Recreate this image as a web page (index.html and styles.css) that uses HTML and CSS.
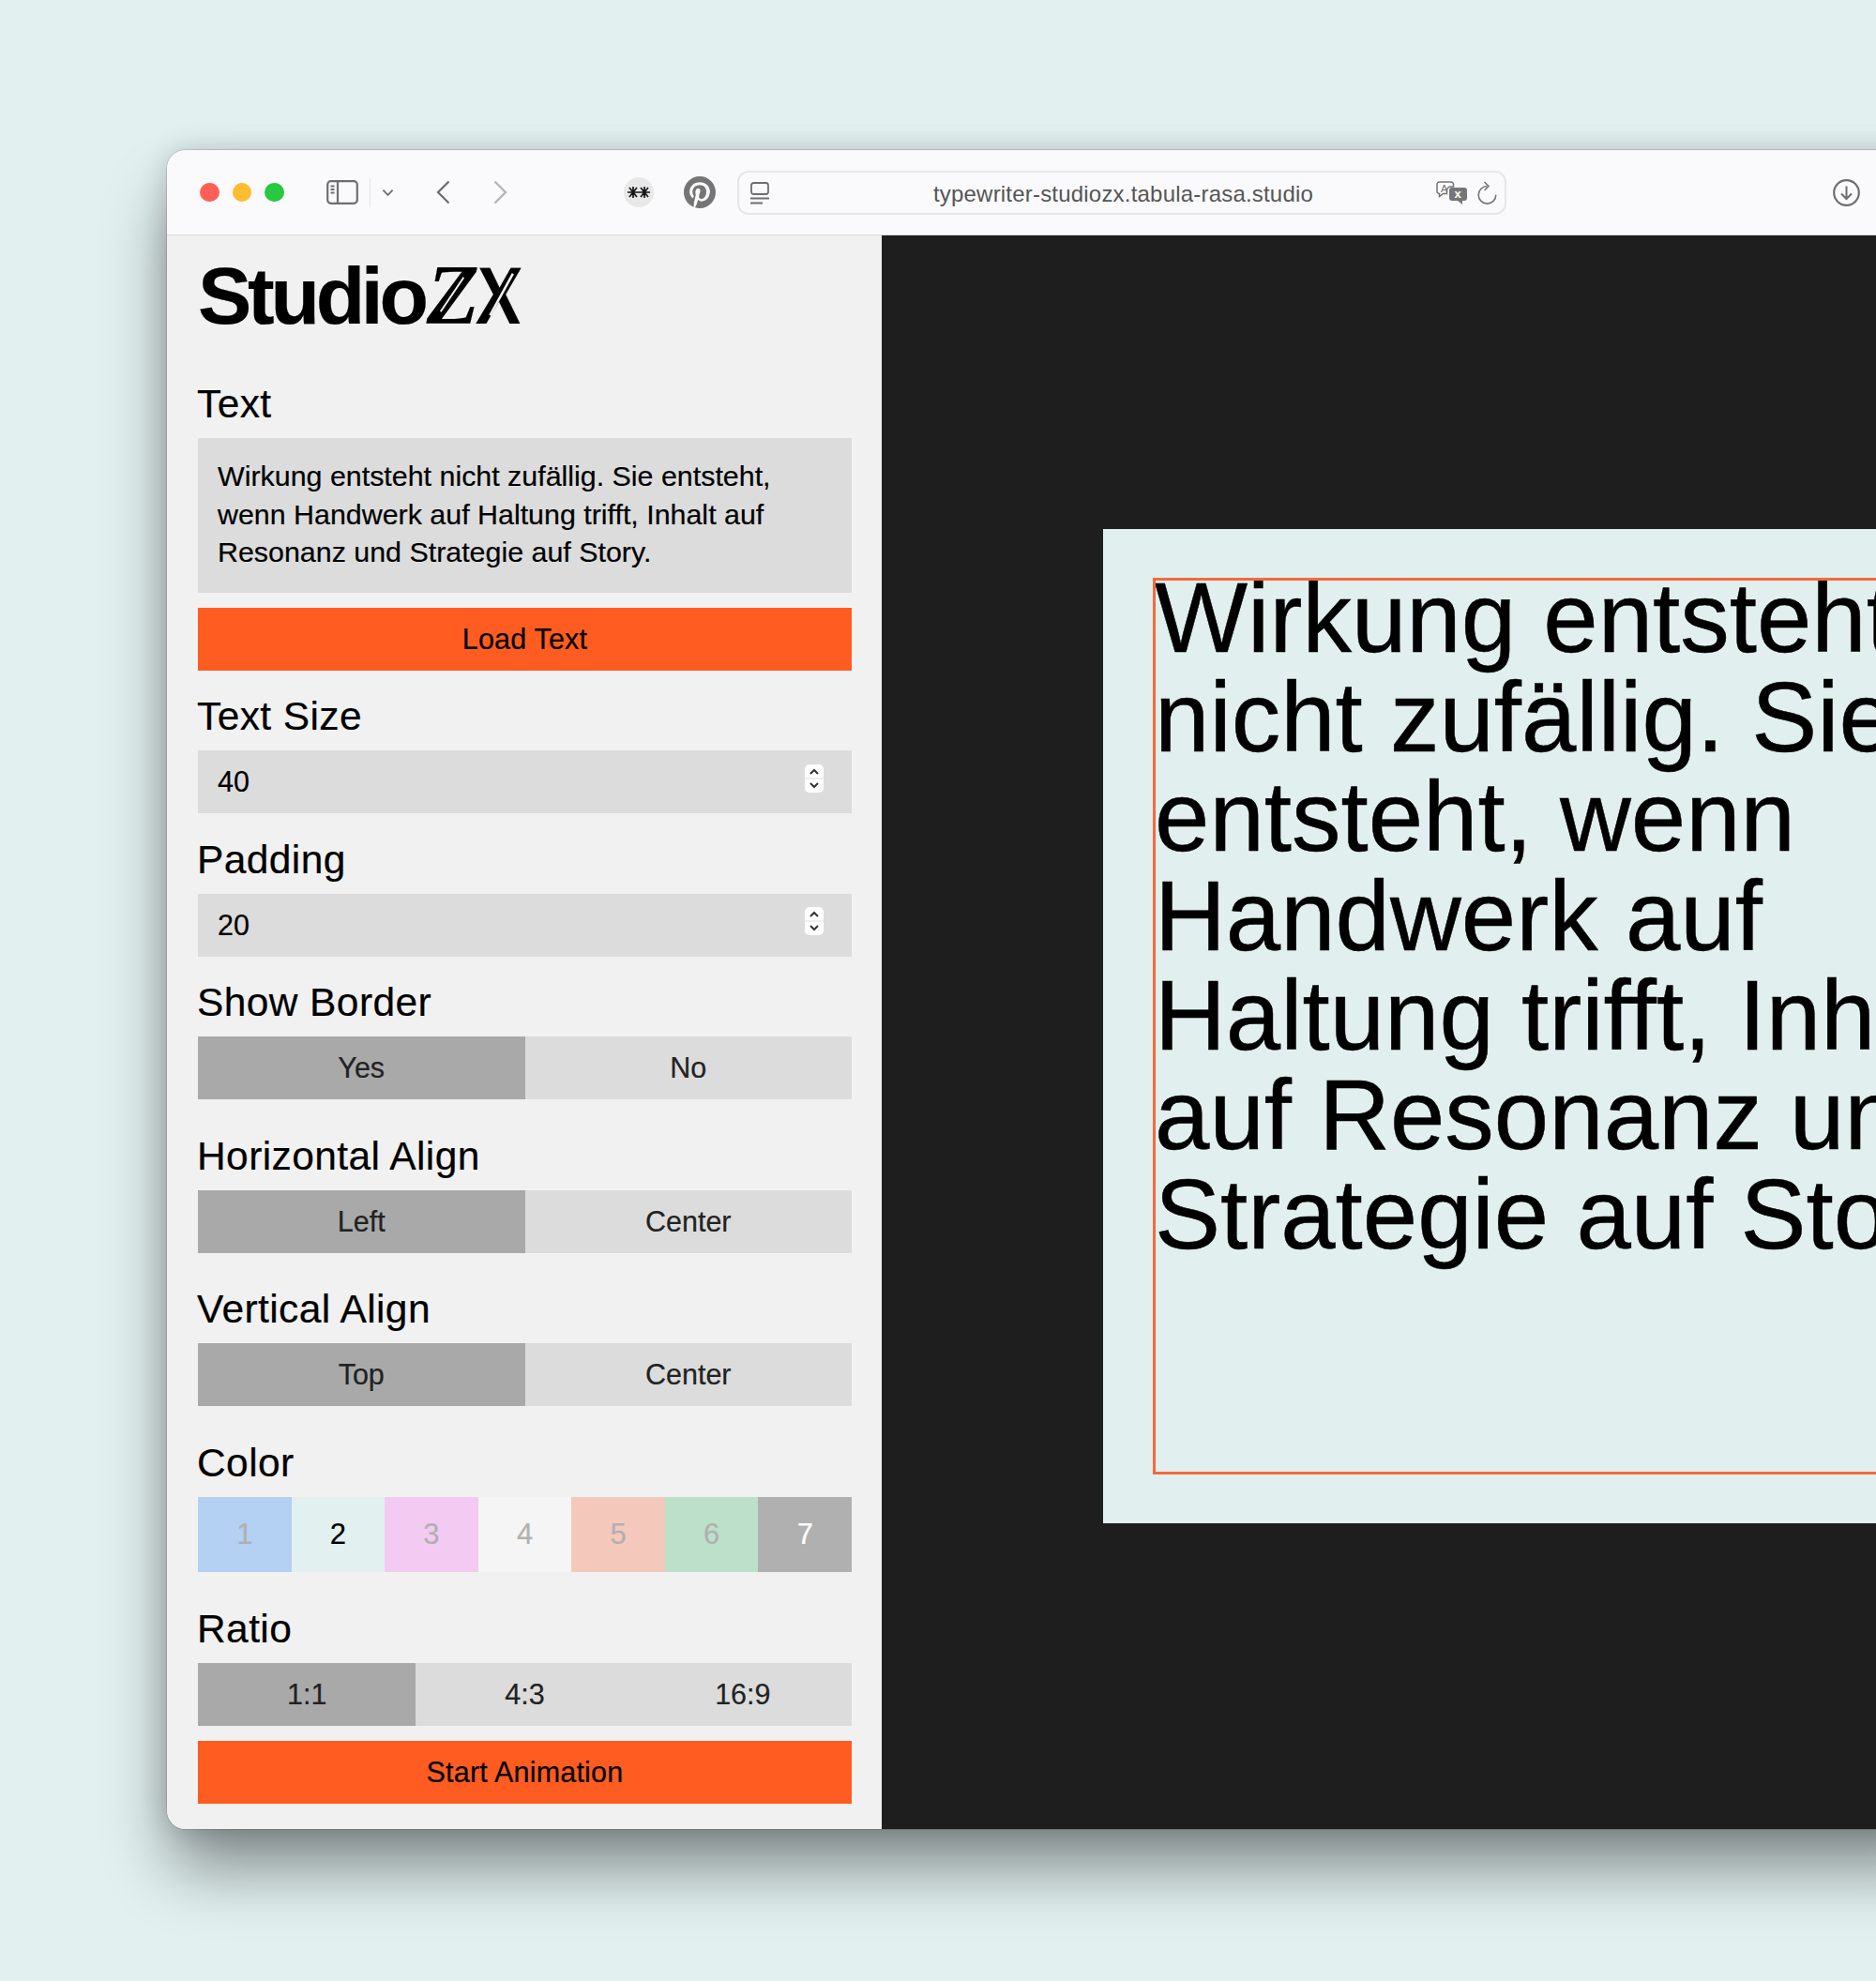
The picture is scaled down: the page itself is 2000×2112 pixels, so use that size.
FILE: index.html
```html
<!DOCTYPE html>
<html lang="de">
<head>
<meta charset="utf-8">
<title>StudioZX</title>
<link rel="stylesheet" href="styles.css">
</head>
<body>
<div class="window">
  <header class="toolbar">
    <span class="light red"></span><span class="light amber"></span><span class="light green"></span>
    <svg class="ic-sidebar" viewBox="0 0 34 26"><rect x="1.2" y="1.2" width="31.6" height="23.6" rx="3.5" fill="none" stroke="#6e6e6e" stroke-width="2.2"/><line x1="12" y1="1" x2="12" y2="25" stroke="#6e6e6e" stroke-width="2.2"/><path d="M4.5 6.5h4M4.5 10h4M4.5 13.5h4" stroke="#6e6e6e" stroke-width="1.8"/></svg>
    <span class="divider"></span>
    <svg class="ic-chevron" viewBox="0 0 14 9"><path d="M1.5 1.5 7 7l5.5-5.5" fill="none" stroke="#6e6e6e" stroke-width="2"/></svg>
    <svg class="ic-back" viewBox="0 0 15 26"><path d="M13.5 1.5 2 13l11.5 11.5" fill="none" stroke="#6e6e6e" stroke-width="2.3"/></svg>
    <svg class="ic-forward" viewBox="0 0 15 26"><path d="M1.5 1.5 13 13 1.5 24.5" fill="none" stroke="#b4b4b4" stroke-width="2.3"/></svg>
    <svg class="ic-star" viewBox="0 0 32 32"><circle cx="16" cy="16" r="16" fill="#e8e8e8"/><path d="M4 16h24M10 10v12M22 10v12M6 11l8 10M14 11l-8 10M18 11l8 10M26 11l-8 10" stroke="#161616" stroke-width="1.7"/></svg>
    <svg class="ic-pin" viewBox="0 0 24 24"><path fill="#757575" d="M12 0C5.373 0 0 5.372 0 12c0 5.084 3.163 9.426 7.627 11.174-.105-.949-.2-2.405.042-3.441.218-.937 1.407-5.965 1.407-5.965s-.359-.719-.359-1.782c0-1.668.967-2.914 2.171-2.914 1.023 0 1.518.769 1.518 1.69 0 1.029-.655 2.568-.994 3.995-.283 1.194.599 2.169 1.777 2.169 2.133 0 3.772-2.249 3.772-5.495 0-2.873-2.064-4.882-5.012-4.882-3.414 0-5.418 2.561-5.418 5.207 0 1.031.397 2.138.893 2.738.098.119.112.224.083.345l-.333 1.36c-.053.22-.174.267-.402.161-1.499-.698-2.436-2.889-2.436-4.649 0-3.785 2.75-7.262 7.929-7.262 4.163 0 7.398 2.967 7.398 6.931 0 4.136-2.607 7.464-6.227 7.464-1.216 0-2.359-.631-2.75-1.378l-.748 2.853c-.271 1.043-1.002 2.35-1.492 3.146C9.57 23.812 10.763 24 12 24c6.627 0 12-5.373 12-12 0-6.628-5.373-12-12-12z"/></svg>
    <div class="address">
      <svg class="ic-reader" viewBox="0 0 20 24"><rect x="1" y="1" width="18" height="12" rx="2.5" fill="none" stroke="#6e6e6e" stroke-width="1.8"/><path d="M0 17.5h20M0 22.5h13" stroke="#6e6e6e" stroke-width="1.8"/></svg>
      <span class="url">typewriter-studiozx.tabula-rasa.studio</span>
      <span class="addr-right">
        <svg class="ic-translate" viewBox="0 0 33 25"><path d="M3.5 1h12.5a2.500 2.500 0 0 1 2.500 2.500V6h-3a4 4 0 0 0-4 4v3.500H7.500l-4 3v-3H3.500A2.500 2.500 0 0 1 1 11V3.500A2.500 2.500 0 0 1 3.500 1z" fill="none" stroke="#757575" stroke-width="1.500"/><text class="tr-a" x="5" y="12">A</text><path d="M17 7h13a3 3 0 0 1 3 3v8a3 3 0 0 1-3 3h-2v4l-5-4h-6a3 3 0 0 1-3-3v-8a3 3 0 0 1 3-3z" fill="#757575"/><text class="tr-x" x="19.500" y="18">x</text></svg>
        <svg class="ic-reload" viewBox="0 0 21 25"><path d="M10.500 5.500a9.300 9.300 0 1 0 9.300 9.300" fill="none" stroke="#757575" stroke-width="1.600"/><path d="M7.500 1l4.500 4.500-4.500 4.500" fill="none" stroke="#757575" stroke-width="1.600"/></svg>
      </span>
    </div>
    <svg class="ic-download" viewBox="0 0 29 29"><circle cx="14.500" cy="14.500" r="13.300" fill="none" stroke="#6e6e6e" stroke-width="2.200"/><path d="M14.500 7.500v13M9 15.500l5.500 5.500 5.500-5.500" fill="none" stroke="#6e6e6e" stroke-width="2"/></svg>
  </header>
  <div class="content">
    <aside class="sidebar">
      <h1 class="logo">Studio<span class="zx"><span class="glyph z">Z</span><span class="glyph x">X</span></span></h1>
      <div class="label first">Text</div>
      <div class="textarea">Wirkung entsteht nicht zufällig. Sie entsteht, wenn Handwerk auf Haltung trifft, Inhalt auf Resonanz und Strategie auf Story.</div>
      <button class="action load">Load Text</button>
      <div class="label">Text Size</div>
      <div class="number"><span>40</span><svg class="spinner" viewBox="0 0 20 30"><rect width="20" height="30" rx="5" fill="#fff"/><path d="M0 15h20" stroke="#dcdcdc"/><path d="M6 10l4-4 4 4M6 20l4 4 4-4" fill="none" stroke="#333" stroke-width="2"/></svg></div>
      <div class="label">Padding</div>
      <div class="number"><span>20</span><svg class="spinner" viewBox="0 0 20 30"><rect width="20" height="30" rx="5" fill="#fff"/><path d="M0 15h20" stroke="#dcdcdc"/><path d="M6 10l4-4 4 4M6 20l4 4 4-4" fill="none" stroke="#333" stroke-width="2"/></svg></div>
      <div class="label">Show Border</div>
      <div class="seg spaced"><button class="opt on">Yes</button><button class="opt">No</button></div>
      <div class="label">Horizontal Align</div>
      <div class="seg spaced"><button class="opt on">Left</button><button class="opt">Center</button></div>
      <div class="label">Vertical Align</div>
      <div class="seg spaced"><button class="opt on">Top</button><button class="opt">Center</button></div>
      <div class="label">Color</div>
      <div class="swatches spaced">
        <button class="sw c1">1</button><button class="sw c2">2</button><button class="sw c3">3</button><button class="sw c4">4</button><button class="sw c5">5</button><button class="sw c6">6</button><button class="sw c7">7</button>
      </div>
      <div class="label">Ratio</div>
      <div class="seg"><button class="opt on">1:1</button><button class="opt">4:3</button><button class="opt">16:9</button></div>
      <button class="action start">Start Animation</button>
    </aside>
    <main class="stage">
      <div class="canvas">
        <div class="frame"><p class="type">Wirkung entsteht nicht zufällig. Sie entsteht, wenn Handwerk auf Haltung trifft, Inhalt auf Resonanz und Strategie auf Story.</p></div>
      </div>
    </main>
  </div>
</div>
</body>
</html>
```
FILE: styles.css
```css
* { box-sizing: border-box; }
html, body { margin: 0; height: 2112px; overflow: hidden; }
body {
  background: #e2f0f0;
  font-family: "Liberation Sans", Arial, sans-serif;
  color: #000;
  padding: 160px 0 0 178px;
}
.window {
  width: 1900px;
  height: 1790px;
  border-radius: 20px;
  box-shadow: 0 45px 70px -5px rgba(0, 0, 0, .44), 0 0 30px rgba(0, 0, 0, .16), 0 0 0 1px rgba(0, 0, 0, .12);
  display: flex;
  flex-direction: column;
}
.toolbar {
  height: 91px;
  flex: none;
  background: #fafafc;
  border-radius: 20px 0 0 0;
  border-bottom: 1px solid #d9d9d9;
  display: flex;
  align-items: center;
  padding-left: 35px;
}
.light { width: 20.500px; height: 20.500px; border-radius: 50%; margin-right: 14px; flex: none; }
.red { background: #ff5f57; }
.amber { background: #febc2e; }
.green { background: #28c840; margin-right: 0; }
.toolbar svg { flex: none; display: block; }
.ic-sidebar { width: 34px; height: 26px; margin-left: 45.500px; }
.divider { width: 1px; height: 31px; background: #e4e4e6; margin-left: 12px; flex: none; }
.ic-chevron { width: 13px; height: 9px; margin-left: 11.500px; }
.ic-back { width: 15px; height: 26px; margin-left: 45px; }
.ic-forward { width: 15px; height: 26px; margin-left: 46.500px; }
.ic-star { width: 32px; height: 32px; margin-left: 124px; }
.ic-pin { width: 34px; height: 34px; margin-left: 31.500px; }
.address {
  width: 820px;
  height: 47px;
  margin: 1px 0 0 23px;
  border: 2px solid #e6e6e8;
  border-radius: 12px;
  background: #fafafc;
  display: grid;
  grid-template-columns: 1fr auto 1fr;
  align-items: center;
  padding: 0 8px 0 12px;
}
.ic-reader { width: 20px; height: 24px; }
.url { font-size: 24px; letter-spacing: .2px; color: #555; white-space: nowrap; padding-top: 2px; }
.addr-right { display: flex; justify-content: flex-end; align-items: center; gap: 11px; }
.ic-translate { width: 33px; height: 25px; }
.ic-reload { width: 21px; height: 25px; }
.tr-a { font-size: 11px; fill: #757575; }
.tr-x { font-size: 13px; font-weight: 700; fill: #fff; }
.ic-download { width: 29px; height: 29px; margin-left: 348px; }

.content { flex: 1; display: flex; min-height: 0; }
.sidebar {
  width: 762px;
  flex: none;
  background: #f1f1f1;
  border-radius: 0 0 0 20px;
  padding: 0 32px 0 33px;
  display: flex;
  flex-direction: column;
  -webkit-text-stroke: .2px currentColor;
}
.logo {
  margin: 0;
  padding-top: 15px;
  font-size: 86px;
  line-height: 96px;
  font-weight: 700;
  letter-spacing: -4.300px;
  white-space: nowrap;
}
.zx { font-family: "Liberation Serif", serif; font-size: 92px; letter-spacing: 0; margin-left: 2px; }
.glyph { position: relative; display: inline-block; }
.z { font-style: italic; width: 51px; }
.x {
  font-family: "Liberation Sans", Arial, sans-serif;
  font-size: 86px;
  transform: scaleX(.84) skewX(-3deg);
  transform-origin: left bottom;
}
.glyph::after {
  content: "";
  position: absolute;
  background: #f1f1f1;
}
.z::after { left: 26px; top: 26px; width: 2.200px; height: 44px; transform: rotate(34deg); }
.x::after { left: 30px; top: 21px; width: 3px; height: 52px; transform: rotate(31deg); }

.label {
  font-size: 42.500px;
  line-height: 46px;
  letter-spacing: .4px;
  margin: 26.600px 0 13px -1px;
  white-space: nowrap;
}
.label.first { margin-top: 45px; }
.textarea {
  height: 164.500px;
  flex: none;
  background: #dcdcdc;
  font-size: 30.400px;
  line-height: 40.500px;
  padding: 20px 21px;
}
.action {
  display: block;
  flex: none;
  width: 100%;
  height: 67px;
  border: 0;
  border-radius: 0;
  margin-top: 16px;
  background: #ff5c21;
  color: #000;
  font: 30.500px "Liberation Sans", Arial, sans-serif;
  letter-spacing: .2px;
}
.number {
  height: 67px;
  flex: none;
  background: #dcdcdc;
  display: flex;
  align-items: center;
  justify-content: space-between;
  padding: 0 30px 0 21px;
  font-size: 30.500px;
}
.spinner { width: 20px; height: 30px; display: block; margin-top: -8px; }
.seg { display: flex; height: 67px; flex: none; }
.spaced { margin-bottom: 11px; }
.opt, .sw {
  flex: 1 1 0;
  border: 0;
  border-radius: 0;
  padding: 0;
  font: 30.500px "Liberation Sans", Arial, sans-serif;
  color: #222;
  background: #dcdcdc;
}
.opt.on { background: #a9a9a9; }
.swatches { display: flex; height: 80px; flex: none; }
.sw { color: #b0b0b0; font-size: 31px; }
.c1 { background: #b4d0f3; }
.c2 { background: #e2f0f0; color: #000; }
.c3 { background: #f3caf2; }
.c4 { background: #f5f5f5; }
.c5 { background: #f4c9bb; }
.c6 { background: #bde0ca; }
.c7 { background: #b0b0b0; color: #fff; }

.stage {
  flex: 1;
  background: #1e1e1e;
  padding: 313px 0 0 236px;
}
.canvas {
  width: 1060px;
  height: 1060px;
  background: #e1efef;
  padding: 52px 53px;
}
.frame {
  width: 954px;
  height: 956px;
  border: 3px solid #f46a38;
  overflow: hidden;
}
.type {
  margin: -13px 0 0 -1px;
  font-size: 105px;
  line-height: 106px;
  -webkit-text-stroke: .5px #000;
}
```
